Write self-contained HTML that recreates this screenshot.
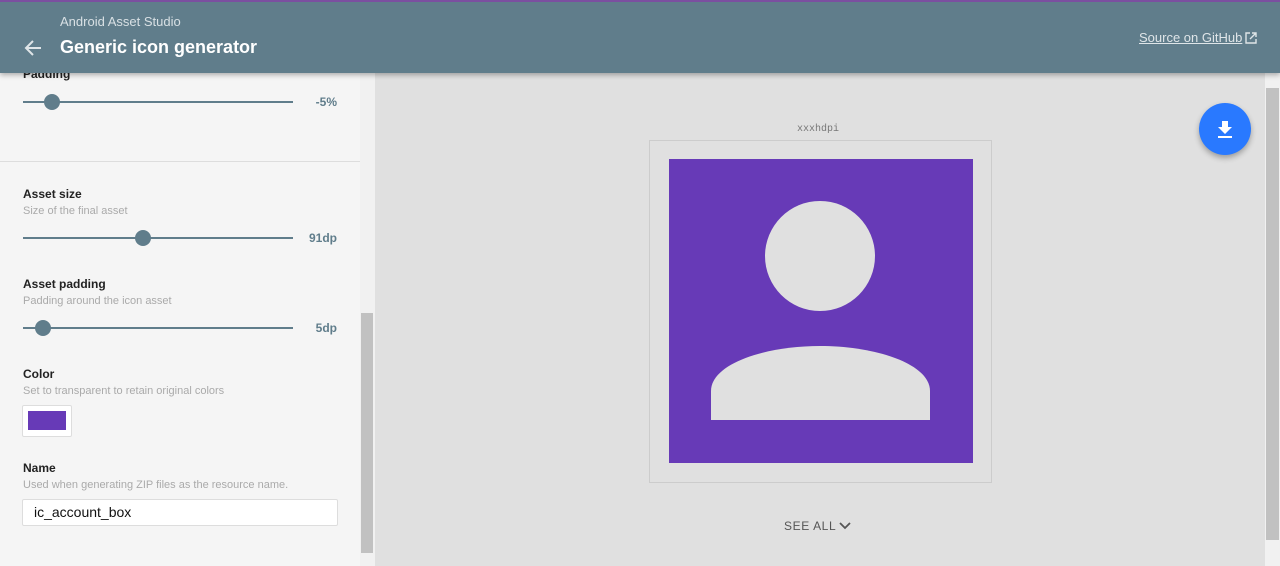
<!DOCTYPE html>
<html><head><style>
*{box-sizing:border-box;margin:0;padding:0}
body{width:1280px;height:566px;overflow:hidden;font-family:"Liberation Sans",sans-serif;background:#e0e0e0;position:relative}
.hdr{position:absolute;left:0;top:0;width:1280px;height:73px;background:#607d8b;border-top:2px solid #7b4fa0;box-shadow:0 2px 5px rgba(0,0,0,.3);z-index:5}
.left{position:absolute;left:0;top:73px;width:360px;height:493px;background:#f5f5f5}
.abs{position:absolute}
.lbl{font-size:12px;color:#222;font-weight:bold;-webkit-text-stroke:0}
.sub{font-size:11px;color:#aaa}
.track{position:absolute;height:2px;background:#607d8b}
.knob{position:absolute;width:16px;height:16px;border-radius:50%;background:#607d8b}
.val{position:absolute;font-size:12px;color:#607d8b;text-align:right;width:40px;font-weight:bold}
</style></head><body>
<div class="hdr">
<div class="abs" style="left:60px;top:12px;font-size:13px;color:#d8e0e4">Android Asset Studio</div>
<div class="abs" style="left:60px;top:35px;font-size:18px;font-weight:bold;color:#fff">Generic icon generator</div>
<svg class="abs" style="left:24px;top:37px" width="18" height="18" viewBox="0 0 18 18"><path d="M17 9H3M9 2L2 9l7 7" stroke="#dfe5e8" stroke-width="2" fill="none"/></svg>
<div class="abs" style="left:1139px;top:28px;font-size:13px;color:#dfe5e8;text-decoration:underline">Source on GitHub</div>
<svg class="abs" style="left:1245px;top:30px" width="12" height="12" viewBox="0 0 12 12"><path d="M5 1H1v10h10V7M7 1h4v4M11 1L5 7" stroke="#dfe5e8" stroke-width="1.4" fill="none"/></svg>
</div>
<div class="left">
<div class="abs lbl" style="left:23px;top:-6px">Padding</div>
<div class="track" style="left:23px;top:28px;width:270px"></div><div class="knob" style="left:44px;top:21px"></div><div class="val" style="left:297px;top:22px">-5%</div>
<div class="abs" style="left:0;top:88px;width:360px;height:1px;background:#ddd"></div>
<div class="abs lbl" style="left:23px;top:114px">Asset size</div>
<div class="abs sub" style="left:23px;top:132px">Size of the final asset</div>
<div class="track" style="left:23px;top:164px;width:270px"></div><div class="knob" style="left:135px;top:157px"></div><div class="val" style="left:297px;top:158px">91dp</div>
<div class="abs lbl" style="left:23px;top:204px">Asset padding</div>
<div class="abs sub" style="left:23px;top:222px">Padding around the icon asset</div>
<div class="track" style="left:23px;top:254px;width:270px"></div><div class="knob" style="left:35px;top:247px"></div><div class="val" style="left:297px;top:248px">5dp</div>
<div class="abs lbl" style="left:23px;top:294px">Color</div>
<div class="abs sub" style="left:23px;top:312px">Set to transparent to retain original colors</div>
<div class="abs" style="left:22px;top:332px;width:50px;height:32px;background:#fff;border:1px solid #ddd;border-radius:2px"><div style="margin:5px;width:38px;height:19px;background:#673ab7"></div></div>
<div class="abs lbl" style="left:23px;top:388px">Name</div>
<div class="abs sub" style="left:23px;top:406px">Used when generating ZIP files as the resource name.</div>
<div class="abs" style="left:22px;top:426px;width:316px;height:27px;background:#fff;border:1px solid #ddd;border-radius:2px;font-size:14px;color:#111;padding:4px 11px">ic_account_box</div>
</div>
<div class="abs" style="left:360px;top:73px;width:15px;height:493px;background:#f1f1f1"><div style="position:absolute;left:1px;top:240px;width:12px;height:240px;background:#c1c1c1"></div></div>
<div class="abs" style="left:1265px;top:73px;width:15px;height:493px;background:#f1f1f1"><div style="position:absolute;left:1px;top:15px;width:13px;height:452px;background:#c1c1c1"></div></div>
<div class="abs" style="left:797px;top:124px;font-size:10px;color:#777;font-family:'Liberation Mono',monospace">xxxhdpi</div>
<div class="abs" style="left:649px;top:140px;width:343px;height:343px;border:1px solid #ccc"></div>
<svg class="abs" style="left:669px;top:159px" width="304" height="304" viewBox="0 0 304 304"><rect width="304" height="304" fill="#673ab7"/><circle cx="151" cy="97" r="55" fill="#e0e0e0"/><path d="M42 261V232C42 205 95 187 151 187S261 205 261 232V261Z" fill="#e0e0e0"/></svg>
<div class="abs" style="left:784px;top:519px;font-size:12px;color:#555;letter-spacing:0.6px">SEE ALL</div>
<svg class="abs" style="left:839px;top:521px" width="12" height="10" viewBox="0 0 12 10"><path d="M1 2l5 5 5-5" stroke="#555" stroke-width="1.8" fill="none"/></svg>
<div class="abs" style="left:1199px;top:103px;width:52px;height:52px;border-radius:50%;background:#2979ff;box-shadow:0 3px 6px rgba(0,0,0,.3)">
<svg style="position:absolute;left:17px;top:17px" width="18" height="18" viewBox="0 0 18 18"><path d="M6 1h6v6h4l-7 7-7-7h4z M2 16h14v2H2z" fill="#fff"/></svg></div>
</body></html>
